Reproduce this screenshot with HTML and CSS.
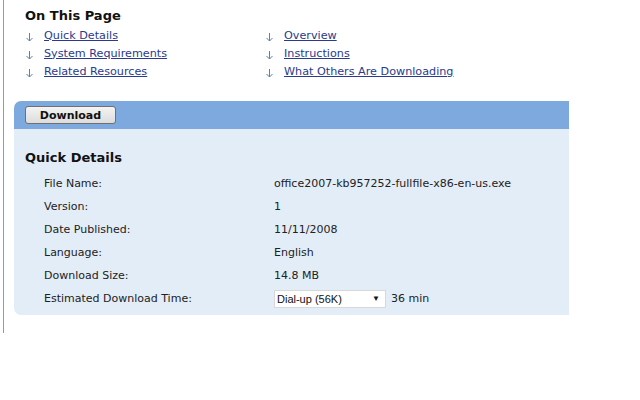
FILE: index.html
```html
<!DOCTYPE html>
<html lang="en">
<head>
    <meta charset="UTF-8">
    <title>Download details</title>
    <link rel="stylesheet" href="styles.css">
</head>
<body>
    <div class="frame">
        <div class="toc">
            <h2>On This Page</h2>
            <div class="toc-cols">
                <ul>
                    <li><svg class="arr" width="9" height="10" viewBox="0 0 9 10"><path d="M4.5 1v8M1.5 6l3 3 3-3" fill="none" stroke="#5a7fb0" stroke-width="1"/></svg><a href="#">Quick Details</a></li>
                    <li><svg class="arr" width="9" height="10" viewBox="0 0 9 10"><path d="M4.5 1v8M1.5 6l3 3 3-3" fill="none" stroke="#5a7fb0" stroke-width="1"/></svg><a href="#">System Requirements</a></li>
                    <li><svg class="arr" width="9" height="10" viewBox="0 0 9 10"><path d="M4.5 1v8M1.5 6l3 3 3-3" fill="none" stroke="#5a7fb0" stroke-width="1"/></svg><a href="#">Related Resources</a></li>
                </ul>
                <ul>
                    <li><svg class="arr" width="9" height="10" viewBox="0 0 9 10"><path d="M4.5 1v8M1.5 6l3 3 3-3" fill="none" stroke="#5a7fb0" stroke-width="1"/></svg><a href="#">Overview</a></li>
                    <li><svg class="arr" width="9" height="10" viewBox="0 0 9 10"><path d="M4.5 1v8M1.5 6l3 3 3-3" fill="none" stroke="#5a7fb0" stroke-width="1"/></svg><a href="#">Instructions</a></li>
                    <li><svg class="arr" width="9" height="10" viewBox="0 0 9 10"><path d="M4.5 1v8M1.5 6l3 3 3-3" fill="none" stroke="#5a7fb0" stroke-width="1"/></svg><a href="#">What Others Are Downloading</a></li>
                </ul>
            </div>
        </div>

        <div class="panel">
            <div class="panel-head">
                <button class="btn">Download</button>
            </div>
            <div class="panel-body">
                <h3>Quick Details</h3>
                <div class="details">
                    <div class="lbl">File Name:</div><div class="val">office2007-kb957252-fullfile-x86-en-us.exe</div>
                    <div class="lbl">Version:</div><div class="val">1</div>
                    <div class="lbl">Date Published:</div><div class="val">11/11/2008</div>
                    <div class="lbl">Language:</div><div class="val">English</div>
                    <div class="lbl">Download Size:</div><div class="val">14.8 MB</div>
                    <div class="lbl">Estimated Download Time:</div>
                    <div class="val">
                        <div class="sel"><span>Dial-up (56K)</span><span class="caret">&#9660;</span></div>
                        <span class="mins">36 min</span>
                    </div>
                </div>
            </div>
        </div>
    </div>
</body>
</html>
```

FILE: styles.css
```css
* { margin: 0; padding: 0; box-sizing: border-box; }
body { background: #fff; font-family: "DejaVu Sans", Verdana, sans-serif; font-size: 11px; color: #222; }
.frame { width: 566px; height: 333px; border-left: 1px solid #999; margin-left: 3px; padding: 7px 0 0 10px; }
.toc { padding-left: 11px; }
.toc h2 { font-size: 13px; font-weight: bold; color: #111; line-height: 17px; }
.toc-cols { display: flex; margin-top: 2px; }
.toc ul { list-style: none; width: 240px; }
.toc li { display: flex; align-items: center; height: 18px; }
.arr { margin: 4px 10px 0 0; flex: none; }
.toc a { color: #2a3a8c; text-decoration: underline; font-size: 11.2px; }
.panel { margin-top: 21px; }
.panel-head { background: #7da9de; height: 28px; border-top-left-radius: 7px; padding: 5px 0 0 11px; }
.btn { font-family: Tahoma, "DejaVu Sans", sans-serif; font-weight: bold; font-size: 11px; color: #111; width: 91px; height: 18px; border: 1px solid #707070; border-radius: 3px; background: linear-gradient(#f4f4f4, #dcdcdc); }
.panel-body { background: #e3edf7; height: 186px; border-bottom-left-radius: 7px; padding: 21px 0 0 11px; }
.panel-body h3 { font-size: 13px; font-weight: bold; color: #111; line-height: 16px; }
.details { display: grid; grid-template-columns: 230px auto; grid-auto-rows: 23px; margin-top: 6px; margin-left: 19px; align-items: center; }
.val { display: flex; align-items: center; }
.sel { display: flex; justify-content: space-between; align-items: center; width: 112px; height: 18px; background: #fff; border: 1px solid #d8d8d8; padding: 0 5px 0 2px; font-family: "Liberation Sans", Arial, sans-serif; font-size: 11px; color: #111; }
.caret { font-size: 8px; }
.mins { margin-left: 5px; }
```
